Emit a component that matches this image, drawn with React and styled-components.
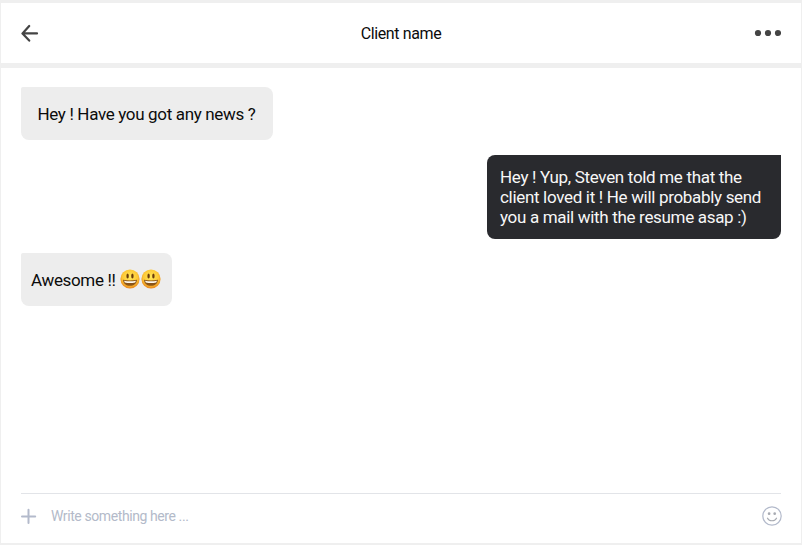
import React from "react";
import styled, { createGlobalStyle, css } from "styled-components";

const GlobalStyle = createGlobalStyle`
  * { box-sizing: border-box; }
  body { margin: 0; background: #efefef; font-family: Roboto, sans-serif; color: #0b0b0b; }
`;

const Window = styled.div`
  display: flex;
  flex-direction: column;
  height: 545px;
  padding: 3px 1px 2px;
  background: #efefef;
`;

const Header = styled.header`
  display: grid;
  grid-template-columns: 1fr auto 1fr;
  align-items: center;
  height: 60px;
  margin-bottom: 5px;
  padding: 0 20px;
  background: #fff;
`;

const Title = styled.h1`
  margin: 2px 0 0;
  font-size: 16px;
  font-weight: 400;
  line-height: 20px;
  letter-spacing: -0.37px;
`;

const IconButton = styled.button`
  display: flex;
  justify-self: ${(p) => (p.$end ? "end" : "start")};
  margin-right: ${(p) => (p.$bleed ? -1 : 0)}px;
  padding: 0;
  border: 0;
  background: none;
`;

const Conversation = styled.main`
  display: flex;
  flex-direction: column;
  flex: 1;
  padding: 0 20px;
  background: #fff;
`;

const Messages = styled.section`
  display: flex;
  flex-direction: column;
  align-items: flex-start;
  gap: 14.5px;
  flex: 1;
  padding-top: 19.4px;
`;

const Bubble = styled.div`
  display: flex;
  align-items: center;
  min-height: 53px;
  margin-left: -0.5px;
  padding: 0 ${(p) => p.$inset + 0.8}px 0 ${(p) => p.$inset}px;
  border-radius: 2px 8px 8px 8px;
  background: #ededed;
  font-size: 17px;
  line-height: 20px;
  letter-spacing: -0.34px;
  white-space: nowrap;
  ${(p) =>
    p.$own &&
    css`
      align-self: flex-end;
      width: 294px;
      min-height: 84px;
      padding-top: 1px;
      border-radius: 8px 0 8px 8px;
      background: #292a2e;
      color: #f7f7f7;
      letter-spacing: -0.32px;
      white-space: normal;
    `}
`;

const Emojis = styled.span`
  display: flex;
  gap: 1.5px;
  margin: -2px 0 0 4px;
`;

const Composer = styled.form`
  display: flex;
  align-items: center;
  height: 50px;
  padding-bottom: 5px;
  border-top: 1px solid #e2e4e8;
`;

const Input = styled.input`
  flex: 1;
  margin-left: 14px;
  padding: 0;
  border: 0;
  outline: 0;
  background: none;
  font: 14px/20px Roboto, sans-serif;
  letter-spacing: -0.41px;
  &::placeholder { color: #b3bac9; opacity: 1; }
`;

const BackIcon = () => (
  <svg width="18" height="18" viewBox="0 0 18 18" fill="none" stroke="#444" strokeWidth="2.2" strokeLinecap="round" strokeLinejoin="round">
    <path d="M16 9.4H2M8.2 2 1.5 9.4l6.7 7.2" />
  </svg>
);

const MoreIcon = () => (
  <svg width="27" height="8" viewBox="0 0 27 8" fill="#444">
    <circle cx="4" cy="4" r="3.1" />
    <circle cx="14" cy="4" r="3.1" />
    <circle cx="24" cy="4" r="3.1" />
  </svg>
);

const PlusIcon = () => (
  <svg width="16" height="16" viewBox="0 0 16 16" fill="none" stroke="#b3bacb" strokeWidth="2" strokeLinecap="round">
    <path d="M7.5 1.7V15M1 8.4h13.2" />
  </svg>
);

const SmileIcon = () => (
  <svg width="20" height="20" viewBox="0 0 20 20" fill="none" stroke="#b3bacb">
    <circle cx="10" cy="10" r="9.2" strokeWidth="1.2" />
    <path d="M5.5 12.2c1.9 3.4 7.1 3.4 9 0" stroke="#a8abb2" strokeWidth="1.2" strokeLinecap="round" />
    <g fill="#a8abb2" stroke="none">
      <circle cx="7.1" cy="7.7" r="1.35" />
      <circle cx="12.7" cy="7.7" r="1.35" />
    </g>
  </svg>
);

const GrinEmoji = ({ id }) => (
  <svg width="20" height="20" viewBox="0 0 20 20">
    <defs>
      <radialGradient id={id} cx=".5" cy=".4" r=".6">
        <stop offset="0" stopColor="#ffe85a" />
        <stop offset=".65" stopColor="#fdc835" />
        <stop offset="1" stopColor="#e8821c" />
      </radialGradient>
    </defs>
    <circle cx="10" cy="10" r="9.6" fill={`url(#${id})`} />
    <ellipse cx="7.6" cy="6.9" rx="1.2" ry="2.5" fill="#6b3b0b" />
    <ellipse cx="12.4" cy="6.9" rx="1.2" ry="2.5" fill="#6b3b0b" />
    <path d="M3 10.8q7 1.6 14 0c-.4 4.1-3.2 6-7 6s-6.6-1.9-7-6z" fill="#8a5318" />
    <path d="M4 11.7q6 1.2 12 0l-.8 1.9q-5.2 1-10.4 0z" fill="#fff8ea" />
  </svg>
);

export default function App() {
  return (
    <>
      <GlobalStyle />
      <Window>
        <Header>
          <IconButton aria-label="Back"><BackIcon /></IconButton>
          <Title>Client name</Title>
          <IconButton $end aria-label="More"><MoreIcon /></IconButton>
        </Header>
        <Conversation>
          <Messages>
            <Bubble $inset={17}>Hey ! Have you got any news ?</Bubble>
            <Bubble $own $inset={13}>
              Hey ! Yup, Steven told me that the client loved it ! He will probably send you a mail with the resume asap :)
            </Bubble>
            <Bubble $inset={10.5}>
              Awesome !!
              <Emojis>
                <GrinEmoji id="grin-a" />
                <GrinEmoji id="grin-b" />
              </Emojis>
            </Bubble>
          </Messages>
          <Composer>
            <IconButton type="button" aria-label="Add"><PlusIcon /></IconButton>
            <Input placeholder="Write something here ..." />
            <IconButton type="button" $bleed aria-label="Emoji"><SmileIcon /></IconButton>
          </Composer>
        </Conversation>
      </Window>
    </>
  );
}
